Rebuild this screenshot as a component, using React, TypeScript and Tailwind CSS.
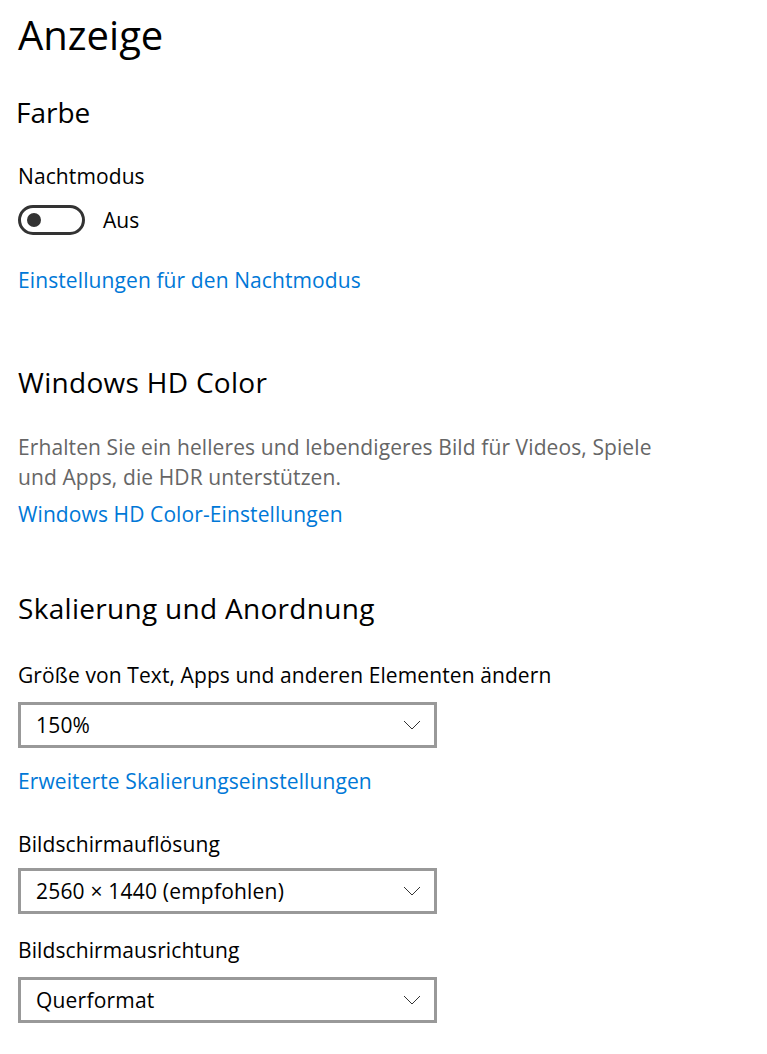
const font = { fontFamily: '"Open Sans", "Noto Sans", sans-serif' };

const Chevron = () => (
  <svg width="18" height="10" viewBox="0 0 18 10" fill="none" className="shrink-0">
    <path d="M1 1 L9 9 L17 1" stroke="#333" strokeWidth="1" />
  </svg>
);

const Dropdown = ({ value, className }: { value: string; className: string }) => (
  <div className={`flex h-[46px] w-[419px] items-center justify-between border-[3px] border-[#999999] bg-white pl-[15px] pr-[13px] text-[21px] leading-[28px] tracking-[0.2px] text-black ${className}`}>
    <span>{value}</span>
    <Chevron />
  </div>
);

const Link = ({ children, className }: { children: string; className: string }) => (
  <a className={`block text-[21px] leading-[28px] tracking-[0.1px] text-[#0078d7] ${className}`}>{children}</a>
);

const App = () => {
  return (
    <div className="min-h-[1054px] w-[767px] bg-white pl-[18px] text-black" style={font}>
      <h1 className="pt-[7px] text-[40px] font-normal leading-[56px]">Anzeige</h1>

      <h2 className="-ml-[2px] mt-[31px] text-[28px] leading-[36px]">Farbe</h2>
      <div className="mt-[32px] text-[21px] leading-[28px] tracking-[0.1px]">Nachtmodus</div>
      <div className="mt-[15px] flex items-center gap-[18px]">
        <div className="flex h-[30px] w-[67px] items-center rounded-full border-[3px] border-[#333333] pl-[6px]">
          <div className="h-[14px] w-[14px] rounded-full bg-[#333333]" />
        </div>
        <span className="text-[21px] leading-[28px]">Aus</span>
      </div>
      <Link className="mt-[31px]">Einstellungen für den Nachtmodus</Link>

      <h2 className="mt-[70px] text-[28px] leading-[36px] tracking-[0.3px]">Windows HD Color</h2>
      <p className="mt-[32px] w-[648px] text-[21px] leading-[30px] tracking-[0.1px] text-[#666666]">
        Erhalten Sie ein helleres und lebendigeres Bild für Videos, Spiele und Apps, die HDR unterstützen.
      </p>
      <Link className="mt-[8px]">Windows HD Color-Einstellungen</Link>

      <h2 className="mt-[62px] text-[28px] leading-[36px] tracking-[0.3px]">Skalierung und Anordnung</h2>
      <div className="mt-[35px] text-[21px] leading-[28px] tracking-[0.1px]">Größe von Text, Apps und anderen Elementen ändern</div>
      <Dropdown value="150%" className="mt-[13px]" />
      <Link className="mt-[19px]">Erweiterte Skalierungseinstellungen</Link>

      <div className="mt-[35px] text-[21px] leading-[28px] tracking-[0.1px]">Bildschirmauflösung</div>
      <Dropdown value="2560 × 1440 (empfohlen)" className="mt-[10px]" />
      <div className="mt-[22px] text-[21px] leading-[28px] tracking-[0.1px]">Bildschirmausrichtung</div>
      <Dropdown value="Querformat" className="mt-[13px]" />
    </div>
  );
};

export default App;
